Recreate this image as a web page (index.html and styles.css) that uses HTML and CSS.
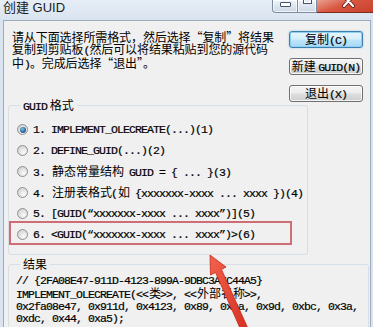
FILE: index.html
```html
<!DOCTYPE html>
<html lang="zh-CN">
<head>
<meta charset="utf-8">
<link rel="stylesheet" href="styles.css">
</head>
<body>
<div class="win">
  <div class="titlebar">
    <span class="title">创建 GUID</span>
    <div class="ctrls">
      <span class="cb min"><i class="mg"></i></span>
      <span class="cb max"><i class="xg"></i></span>
      <span class="cb close">
        <svg class="xs" width="14" height="8" viewBox="0 0 14 8"><path d="M2 -4 L11 6 M11 -4 L2 6" stroke="#6b1f16" stroke-width="4" stroke-linecap="round"/><path d="M2 -4 L11 6 M11 -4 L2 6" stroke="#fff" stroke-width="2.2" stroke-linecap="round"/></svg>
      </span>
    </div>
  </div>
  <div class="client">
    <div class="top">
      <p class="intro">请从下面选择所需格式，然后选择“复制”将结果<br>复制到剪贴板<span class="a">(</span>然后可以将结果粘贴到您的源代码<br>中<span class="a">)</span>。完成后选择“退出”。</p>
      <div class="btns">
        <button class="btn def">复制<span class="a">(C)</span></button>
        <button class="btn">新建 <span class="a">GUID(N)</span></button>
        <button class="btn">退出<span class="a">(X)</span></button>
      </div>
    </div>
    <div class="group fmt">
      <div class="gtitle"><span class="a">GUID</span> 格式</div>
      <ul class="opts">
        <li><span class="radio on"></span><span class="m">1. IMPLEMENT_OLECREATE(...)(1)</span></li>
        <li><span class="radio"></span><span class="m">2. DEFINE_GUID(...)(2)</span></li>
        <li><span class="radio"></span><span class="m">3. <span class="cj">静态常量结构</span> GUID = { ... }(3)</span></li>
        <li><span class="radio"></span><span class="m">4. <span class="cj">注册表格式</span>(<span class="cj">如</span> {xxxxxxx-xxxx ... xxxx })(4)</span></li>
        <li><span class="radio"></span><span class="m">5. [GUID(“xxxxxxx-xxxx ... xxxx”)](5)</span></li>
        <li><span class="radio"></span><span class="m">6. &lt;GUID(“xxxxxxx-xxxx ... xxxx”)&gt;(6)</span></li>
      </ul>
      <div class="mark"></div>
    </div>
    <div class="group res">
      <div class="gtitle">结果</div>
      <div class="code m">// {2FA08E47-911D-4123-899A-9DBC3A7C44A5}
IMPLEMENT_OLECREATE(&lt;&lt;<span class="cj">类</span>&gt;&gt;, &lt;&lt;<span class="cj">外部名称</span>&gt;&gt;,
0x2fa08e47, 0x911d, 0x4123, 0x89, 0xba, 0x9d, 0xbc, 0x3a,
0xdc, 0x44, 0xa5);</div>
    </div>
  </div>
  <svg class="arrow" width="373" height="327" viewBox="0 0 373 327">
    <defs>
      <linearGradient id="ag" x1="0" y1="0" x2="1" y2="1">
        <stop offset="0" stop-color="#f2624c"/>
        <stop offset="1" stop-color="#d42c1e"/>
      </linearGradient>
    </defs>
    <polygon points="210,255 226,267 221.5,269.5 250,333 243.5,336 215.5,272.5 210.5,275" fill="url(#ag)" stroke="#c4281c" stroke-width="0.8" stroke-linejoin="round"/>
  </svg>
</div>
</body>
</html>
```

FILE: styles.css
```css
html, body {
  margin: 0;
  padding: 0;
}
body {
  width: 373px;
  height: 327px;
  overflow: hidden;
  font-family: "Noto Sans CJK SC", "Liberation Sans", sans-serif;
  font-size: 12px;
  color: #000;
}
.win {
  position: relative;
  width: 373px;
  height: 327px;
  overflow: hidden;
  background: linear-gradient(#e6edf6, #d9e4f0 20px, #d9e4f0);
}
.titlebar {
  height: 20px;
  display: flex;
  align-items: flex-start;
}
.title {
  font-family: "Liberation Sans", "Noto Sans CJK SC", sans-serif;
  font-size: 13px;
  line-height: 16px;
  padding-left: 3px;
  color: #1a1a1a;
}
.ctrls {
  margin-left: auto;
  margin-right: -2px;
  display: flex;
  height: 13px;
}
.cb {
  box-sizing: border-box;
  height: 13px;
  border: 1px solid #7d8ca1;
  border-top: none;
  display: flex;
  justify-content: center;
  align-items: flex-start;
}
.min {
  width: 26px;
  border-radius: 0 0 0 4px;
  background: linear-gradient(#f1f5fa, #dbe4ee 55%, #cdd8e5);
  box-shadow: inset 0 0 0 1px rgba(255,255,255,0.7);
}
.max {
  width: 19px;
  border-left: none;
  background: linear-gradient(#f1f5fa, #dbe4ee 55%, #cdd8e5);
  box-shadow: inset 0 0 0 1px rgba(255,255,255,0.7);
}
.close {
  width: 58px;
  border-left: none;
  border-color: #7a2a20;
  background: linear-gradient(160deg, #e9a293, #d8553f 45%, #c7402c);
  padding-left: 6px;
}
.mg {
  display: block;
  width: 9px;
  height: 3px;
  margin-top: 2px;
  border: 1px solid #47556a;
  background: #fff;
  border-radius: 1px;
}
.xg {
  display: block;
  width: 7px;
  height: 4px;
  margin-top: -1px;
  border: 1px solid #47556a;
  border-top-width: 0;
  box-shadow: inset 0 0 0 1px #fff;
  background: #e8eef5;
}
.xs {
  display: block;
}
.client {
  margin: 0 2px 0 3px;
  border: 1px solid #9eabba;
  border-bottom: none;
  background: #f0f0f0;
  height: 320px;
}
.top {
  display: flex;
  justify-content: space-between;
  padding: 10px 7px 0 8px;
}
.intro {
  margin: 0;
  line-height: 12px;
  font-size: 12px;
  white-space: nowrap;
  letter-spacing: -0.1px;
}
.a {
  font-family: "Liberation Mono", monospace;
  font-size: 11.5px;
  letter-spacing: -0.9px;
  -webkit-text-stroke: 0.2px #000;
}
.btns {
  display: flex;
  flex-direction: column;
  gap: 10px;
}
.btn {
  box-sizing: border-box;
  width: 74px;
  height: 17px;
  padding: 0;
  margin: 0;
  border: 1px solid #707070;
  border-radius: 3px;
  background: linear-gradient(#f4f4f4, #ececec 48%, #dddddd 52%, #cfcfcf);
  box-shadow: inset 0 0 0 1px rgba(255,255,255,0.75);
  font-family: "Noto Sans CJK SC", sans-serif;
  font-size: 12px;
  line-height: 14px;
  color: #000;
  white-space: nowrap;
}
.btn.def {
  border-color: #3c7fb1;
  background: linear-gradient(#e6f5fd, #d7effc 48%, #bde5fb 52%, #a8d9f4);
  box-shadow: inset 0 0 0 1px #8fd0f3, 0 0 2px rgba(90,160,210,0.6);
}
.group {
  position: relative;
  box-sizing: border-box;
  border: 1px solid #d5dfe5;
  border-radius: 3px;
}
.fmt {
  width: 300px;
  margin: 3px 0 0 4px;
  padding-bottom: 8px;
}
.res {
  margin: 9px 1px 0 4px;
  height: 120px;
}
.gtitle {
  width: max-content;
  margin: -7px 0 0 11px;
  padding: 0 3px;
  background: #f0f0f0;
  line-height: 12px;
  font-size: 12px;
}
.opts {
  list-style: none;
  margin: 0;
  padding: 6px 0 1px 8px;
}
.opts li {
  height: 21px;
  display: flex;
  align-items: center;
  gap: 5px;
}
.m {
  font-family: "Liberation Mono", monospace;
  font-size: 11.5px;
  letter-spacing: -0.9px;
  line-height: 12px;
  white-space: pre;
  -webkit-text-stroke: 0.2px #000;
}
.cj {
  font-family: "Noto Sans CJK SC", sans-serif;
  font-size: 12px;
  letter-spacing: 0;
  margin-left: 1px;
  margin-right: -1px;
  -webkit-text-stroke: 0;
}
.radio {
  position: relative;
  box-sizing: border-box;
  width: 11px;
  height: 11px;
  border-radius: 50%;
  border: 1px solid #8d9094;
  background: radial-gradient(circle at 65% 70%, #fbfbfb 0%, #e4e4e4 45%, #c9c9c9 100%);
  flex: none;
}
.radio.on::after {
  content: "";
  position: absolute;
  left: 1.5px;
  top: 1.5px;
  width: 6px;
  height: 6px;
  border-radius: 50%;
  background: radial-gradient(circle at 40% 35%, #8cc4e6 0%, #2a6aa0 55%, #123e63 100%);
}
.mark {
  position: absolute;
  left: 0;
  top: 115px;
  width: 283px;
  height: 24px;
  box-sizing: border-box;
  border: 2px solid #cf6d76;
}
.code {
  padding: 5px 0 0 7px;
}
.arrow {
  position: absolute;
  left: 0;
  top: 0;
  pointer-events: none;
}
```
